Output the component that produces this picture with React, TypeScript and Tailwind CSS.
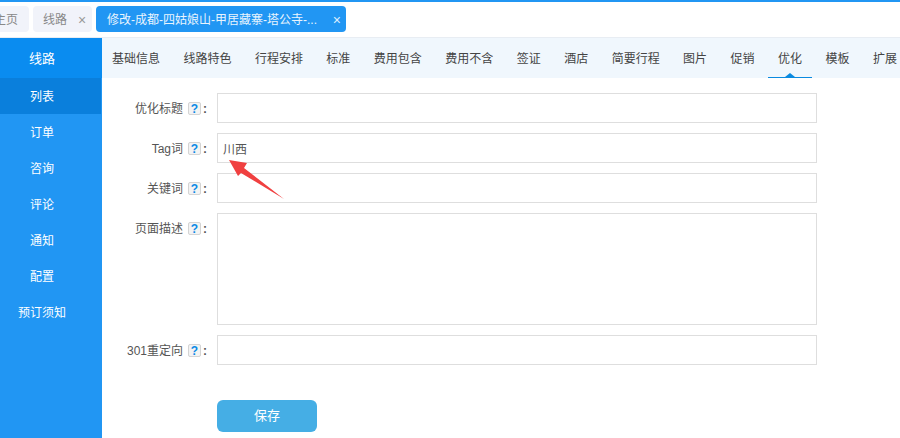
const fontStack = { fontFamily: '"Liberation Sans", "Noto Sans CJK SC", sans-serif' };

const navTabs = ['基础信息', '线路特色', '行程安排', '标准', '费用包含', '费用不含', '签证', '酒店', '简要行程', '图片', '促销', '优化', '模板', '扩展'];
const menu = ['订单', '咨询', '评论', '通知', '配置', '预订须知'];

function HelpIcon() {
	return (
		<span className="flex h-[13px] w-[13px] items-center justify-center rounded-[2px] border border-[#d4d4d4] bg-[#f3f3f3] text-[12px] font-bold leading-none text-[#0a8ae6]">
			?
		</span>
	);
}

function FieldLabel({ text }: { text: string }) {
	return (
		<div className="flex h-[30px] w-[115px] shrink-0 items-center justify-end pt-[1px] text-[12px] text-[#555]">
			<span>{text}</span>
			<span className="ml-[5px]"><HelpIcon /></span>
			<span className="ml-[2px] mr-[10px] font-bold">:</span>
		</div>
	);
}

export default function App() {
	return (
		<div className="relative flex h-[438px] w-[900px] flex-col overflow-hidden bg-white" style={fontStack}>
			{/* Top tab strip */}
			<div className="flex h-[38px] shrink-0 items-start gap-[4px] overflow-hidden border-t-2 border-b border-t-[#2196f3] border-b-[#e8edf3] pt-[4px] text-[12px]">
				<div className="-ml-[6px] flex h-[26px] w-[35px] shrink-0 items-center rounded-[4px] bg-[#f1f3fa] pt-[1px] text-[#888]">主页</div>
				<div className="flex h-[26px] w-[59px] shrink-0 items-center rounded-[4px] bg-[#f1f3fa] pl-[10px] pt-[1px] text-[#888]">
					<span>线路</span>
					<span className="ml-[11px] text-[14px] leading-none text-[#999]">×</span>
				</div>
				<div className="flex h-[26px] w-[250px] shrink-0 items-center rounded-[4px] bg-[#2196f3] pl-[11px] pt-[1px] text-[#e8f4fe]">
					<span>修改-成都-四姑娘山-甲居藏寨-塔公寺-...</span>
					<span className="ml-auto mr-[5px] text-[14px] leading-none text-[#dcefff]">×</span>
				</div>
			</div>

			<div className="flex min-h-0 flex-1">
				{/* Sidebar */}
				<div className="flex w-[102px] shrink-0 flex-col bg-[#2196f3] text-[12px] text-white">
					<div className="flex h-[40px] shrink-0 items-center justify-center bg-[#0a8cf0] pr-[18px] pt-[2px] text-[13px]">线路</div>
					<div className="mr-[1px] flex h-[36px] shrink-0 items-center justify-center bg-[#0a7fdc] pr-[17px] pt-[2px]">列表</div>
					{menu.map((item) => (
						<div key={item} className="flex h-[36px] shrink-0 items-center justify-center pr-[18px] pt-[2px]">{item}</div>
					))}
				</div>

				{/* Main */}
				<div className="min-w-0 flex-1">
					<div className="flex h-[40px] gap-[3.45px] overflow-hidden bg-[#f0f7fd] text-[12px] text-[#444]">
						{navTabs.map((tab) => (
							<div
								key={tab}
								className={`relative flex h-[40px] shrink-0 items-center px-[10px] pt-[2px] ${tab === '优化' ? 'border-b border-[#0a8ae0]' : ''}`}
							>
								{tab}
								{tab === '优化' && (
									<span className="absolute bottom-0 left-[17px] h-0 w-0 border-x-[5px] border-b-[4px] border-x-transparent border-b-[#0a8ae0]" />
								)}
							</div>
						))}
					</div>

					<div className="flex flex-col gap-[10px] pt-[15px]">
						<div className="flex">
							<FieldLabel text="优化标题" />
							<input className="h-[30px] w-[600px] border border-[#dedede] bg-white px-[5px] text-[12px] outline-none" />
						</div>
						<div className="flex">
							<FieldLabel text="Tag词" />
							<input defaultValue="川西" className="h-[30px] w-[600px] border border-[#dedede] bg-white px-[5px] text-[12px] text-[#555] outline-none" />
						</div>
						<div className="flex">
							<FieldLabel text="关键词" />
							<input className="h-[30px] w-[600px] border border-[#dedede] bg-white px-[5px] text-[12px] outline-none" />
						</div>
						<div className="flex">
							<FieldLabel text="页面描述" />
							<textarea className="h-[112px] w-[600px] resize-none border border-[#dedede] bg-white px-[5px] text-[12px] outline-none" />
						</div>
						<div className="flex">
							<FieldLabel text="301重定向" />
							<input className="h-[30px] w-[600px] border border-[#dedede] bg-white px-[5px] text-[12px] outline-none" />
						</div>
					</div>

					<button className="ml-[115px] mt-[35px] h-[32px] w-[100px] rounded-[6px] bg-[#45aee5] text-[13px] text-white">保存</button>
				</div>
			</div>

			{/* Red annotation arrow */}
			<svg className="pointer-events-none absolute left-0 top-0" width="900" height="438">
				<polygon points="229,160 247,163 244,168 284,199 241,173 238,176" fill="#f04040" />
			</svg>
		</div>
	);
}
